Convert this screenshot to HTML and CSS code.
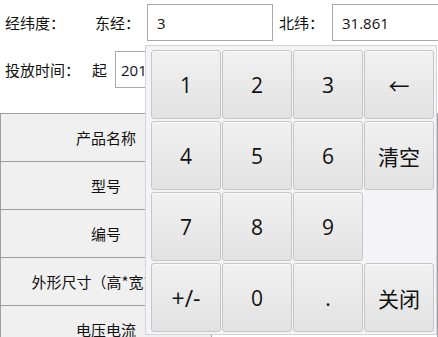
FILE: index.html
```html
<!DOCTYPE html>
<html lang="zh-CN">
<head>
    <meta charset="UTF-8">
    <title>投放信息</title>
    <link rel="stylesheet" href="styles.css">
</head>
<body>
    <div class="form-row row-geo">
        <span class="label">经纬度：</span>
        <span class="sub-label lng-label">东经：</span>
        <input type="text" class="field lng-field" value="3">
        <span class="sub-label lat-label">北纬：</span>
        <input type="text" class="field lat-field" value="31.861">
    </div>
    <div class="form-row row-time">
        <span class="label">投放时间：</span>
        <span class="sub-label start-label">起</span>
        <input type="text" class="field time-field" value="2018-01-01">
    </div>

    <table class="spec-table">
        <tr><th>产品名称</th><td></td></tr>
        <tr><th>型号</th><td></td></tr>
        <tr><th>编号</th><td></td></tr>
        <tr><th>外形尺寸（高*宽*长）</th><td></td></tr>
        <tr><th>电压电流</th><td></td></tr>
    </table>

    <div class="keypad">
        <button class="key">1</button>
        <button class="key">2</button>
        <button class="key">3</button>
        <button class="key">&larr;</button>
        <button class="key">4</button>
        <button class="key">5</button>
        <button class="key">6</button>
        <button class="key">清空</button>
        <button class="key">7</button>
        <button class="key">8</button>
        <button class="key">9</button>
        <div class="key-blank"></div>
        <button class="key key-sign">+/-</button>
        <button class="key">0</button>
        <button class="key">.</button>
        <button class="key">关闭</button>
    </div>
</body>
</html>
```

FILE: styles.css
```css
body {
    margin: 0;
    background-color: #ffffff;
    font-family: "Noto Sans CJK SC", "DejaVu Sans", sans-serif;
    font-size: 15px;
    color: #111111;
    overflow: hidden;
    position: relative;
    width: 438px;
    height: 337px;
}

.form-row {
    display: flex;
    align-items: center;
    white-space: nowrap;
}

.form-row > * {
    flex-shrink: 0;
}

.row-geo {
    height: 37px;
    padding-top: 4px;
}

.row-time {
    height: 37px;
    margin-top: 10px;
}

.label {
    padding-left: 5px;
}

.lng-label {
    margin-left: 30px;
    width: 52px;
}

.lat-label {
    margin-left: 6px;
    width: 53px;
}

.start-label {
    margin-left: 12px;
    width: 23px;
}

.field {
    box-sizing: border-box;
    height: 37px;
    border: 1px solid #a9a9a9;
    padding: 0 9px;
    font-family: "Open Sans", "Noto Sans CJK SC", sans-serif;
    font-size: 15px;
    color: #111111;
    background: #ffffff;
    outline: none;
}

.lng-field {
    width: 126px;
}

.lat-field {
    width: 120px;
}

.time-field {
    width: 160px;
    padding-left: 5px;
}

.spec-table {
    margin-top: 25px;
    border-collapse: collapse;
    width: 438px;
}

.spec-table th {
    width: 210px;
    height: 47px;
    padding: 0;
    background-color: #f0f0f0;
    border: 1px solid #a0a0a0;
    font-weight: normal;
    font-size: 15px;
    text-align: center;
    white-space: nowrap;
    overflow: hidden;
}

.spec-table td {
    border: 1px solid #a0a0a0;
    background-color: #ffffff;
}

.keypad {
    position: absolute;
    left: 145px;
    top: 45px;
    width: 292px;
    height: 290px;
    box-sizing: border-box;
    padding: 4px 3px 3px 5px;
    background-color: #f4f4f7;
    border: 1px solid #d4d4d8;
    display: grid;
    grid-template-columns: repeat(4, 70px);
    grid-template-rows: repeat(4, 69px);
    gap: 2px 1px;
}

.key {
    margin: 0;
    padding: 0;
    border: 1px solid #c6c6c6;
    border-radius: 3px;
    background: linear-gradient(#f1f1f1, #e2e2e2);
    box-shadow: inset 0 1px 0 #fafafa;
    font-family: "Open Sans", "Noto Sans CJK SC", sans-serif;
    font-size: 21px;
    color: #111111;
}

.key-sign {
    font-size: 23px;
}
```
